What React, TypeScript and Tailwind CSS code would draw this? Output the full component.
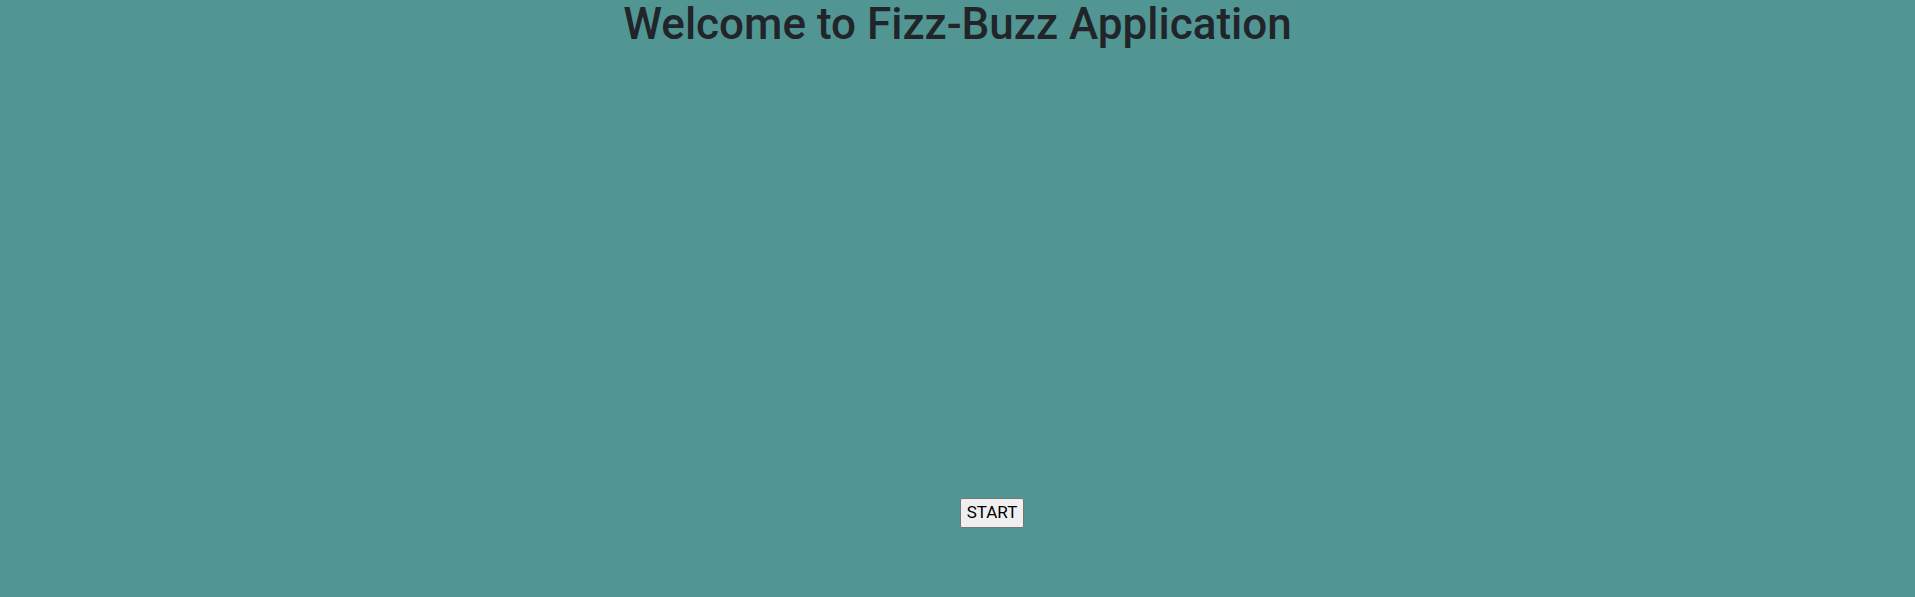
export default function App() {
  return (
    <div className="min-h-[597px] bg-[#529694] flex flex-col items-center">
      <h1 className="text-[44px] leading-[48px] font-medium text-[#212529] m-0 font-['Roboto',Arial,sans-serif]">
        Welcome to Fizz-Buzz Application
      </h1>
      <button className="mt-[450px] ml-[69px] h-[30px] px-[6px] text-[17px] text-black bg-[#efefef] border border-[#767676] rounded-[2px] font-['Roboto',Arial,sans-serif]">
        START
      </button>
    </div>
  );
}
